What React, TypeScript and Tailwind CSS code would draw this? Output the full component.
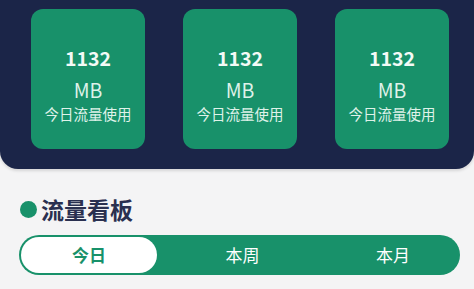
import React from "react";

const font = { fontFamily: '"Noto Sans CJK SC", "Noto Sans", sans-serif' };

function Card() {
  return (
    <div className="w-[114px] h-[140px] rounded-[12px] bg-[#18916a] flex flex-col items-center pt-[37px]">
      <div className="text-[19.5px] leading-[24px] font-bold text-[#f3faf6]">1132</div>
      <div className="mt-[8px] text-[19.5px] leading-[24px] text-[#dff2e9]">MB</div>
      <div className="mt-[2px] text-[14.5px] leading-[20px] text-[#dff2e9]">今日流量使用</div>
    </div>
  );
}

export default function App() {
  return (
    <div className="w-[474px] h-[289px] bg-[#f4f4f5] overflow-hidden" style={font}>
      <div className="h-[169px] bg-[#1b2548] rounded-b-[18px] flex justify-between pl-[31px] pr-[25px] pt-[9px] shadow-[0_2px_3px_rgba(0,0,0,0.12)]">
        <Card />
        <Card />
        <Card />
      </div>
      <div className="mt-[26px] flex items-center pl-[20px]">
        <div className="w-[17px] h-[17px] rounded-full bg-[#18916a]" />
        <div className="ml-[4px] text-[23px] leading-[29px] font-bold text-[#2a3050]">流量看板</div>
      </div>
      <div className="mt-[11px] ml-[19px] w-[441px] h-[40px] rounded-full bg-[#18916a] p-[2px] grid grid-cols-[136px_1fr_130px]">
        <div className="rounded-full bg-white flex items-center justify-center text-[17px] font-bold text-[#18916a]">今日</div>
        <div className="flex items-center justify-center text-[17px] text-white">本周</div>
        <div className="flex items-center justify-center text-[17px] text-white">本月</div>
      </div>
    </div>
  );
}
